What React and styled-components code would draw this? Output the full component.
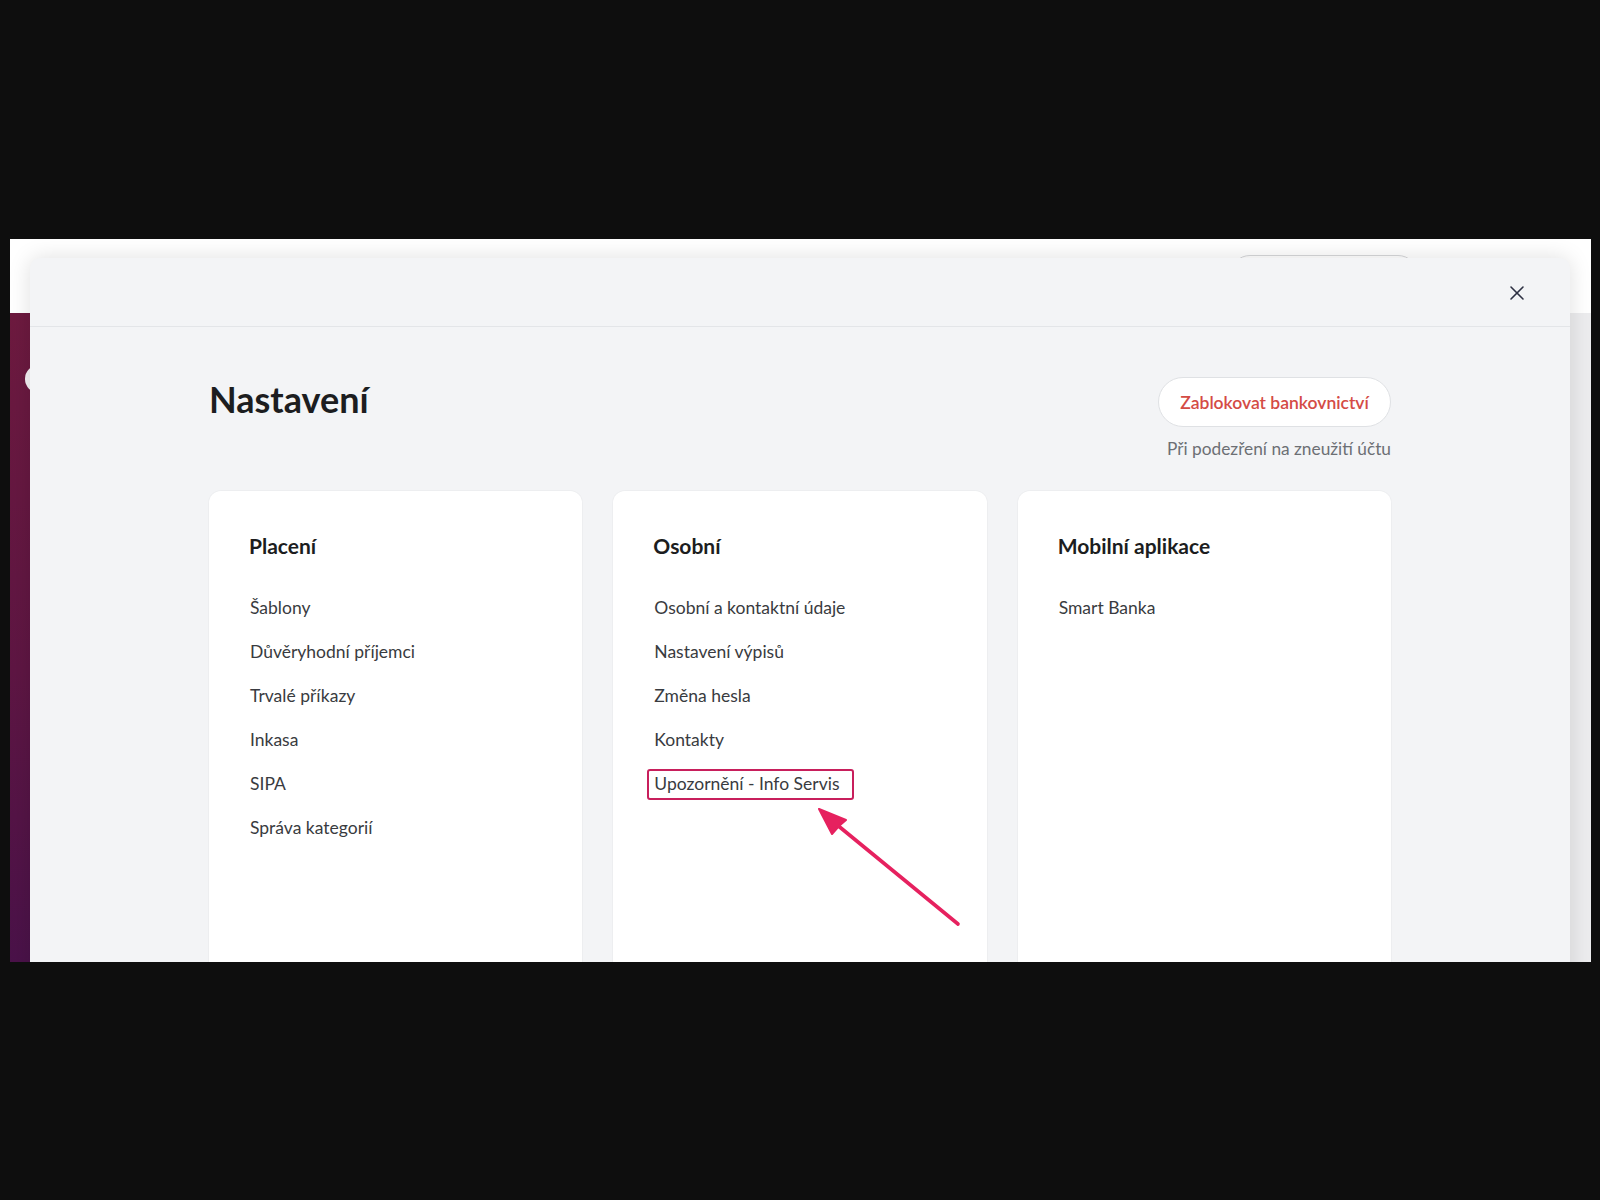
import React from "react";
import styled, { createGlobalStyle } from "styled-components";
import { X } from "lucide-react";

const GlobalStyle = createGlobalStyle`
  html, body {
    margin: 0;
    padding: 0;
    background: #0e0e0e;
  }
  body {
    font-family: Lato, "Open Sans", "Liberation Sans", sans-serif;
    -webkit-font-smoothing: antialiased;
  }
  * { box-sizing: border-box; }
`;

const Stage = styled.div`
  width: 1600px;
  height: 1200px;
  padding: 239px 9px 0 10px;
  background: #0e0e0e;
`;

const Frame = styled.div`
  position: relative;
  width: 1581px;
  height: 723px;
  overflow: hidden;
  background: #ececee;
  display: flex;
  flex-direction: column;
`;

const PageHeader = styled.header`
  height: 74px;
  flex: none;
  background: #ffffff;
  display: flex;
  justify-content: flex-end;
  align-items: flex-start;
  padding: 16px 173px 0 0;
`;

const HeaderPill = styled.div`
  width: 188px;
  height: 40px;
  border-radius: 20px;
  border: 1px solid #d6d7da;
  background: #ffffff;
`;

const PageBody = styled.div`
  flex: 1;
  display: flex;
`;

const Sidebar = styled.aside`
  width: 20px;
  flex: none;
  background: linear-gradient(180deg, #6d1a3f 0%, #5e1643 55%, #4a1249 100%);
  padding-top: 52px;
  display: flex;
  flex-direction: column;
`;

const SidebarDot = styled.div`
  width: 28px;
  height: 28px;
  margin-left: 15px;
  border-radius: 50%;
  background: #f4f1f3;
  flex: none;
`;

const PageContent = styled.main`
  flex: 1;
  background: #ececee;
`;

const Modal = styled.section`
  position: absolute;
  top: 19px;
  left: 20px;
  right: 21px;
  bottom: -40px;
  background: #f3f4f6;
  border-radius: 10px;
  box-shadow: 0 0 22px rgba(0, 0, 0, 0.13);
  display: flex;
  flex-direction: column;
`;

const ModalHeader = styled.div`
  height: 69px;
  flex: none;
  border-bottom: 1px solid #e3e5e8;
  display: flex;
  justify-content: flex-end;
  align-items: center;
  padding: 2px 41px 0 0;
`;

const CloseButton = styled.button`
  width: 24px;
  height: 24px;
  padding: 0;
  border: none;
  background: transparent;
  color: #2e3143;
  display: flex;
  align-items: center;
  justify-content: center;
  cursor: pointer;
`;

const ModalBody = styled.div`
  width: 1182px;
  margin: 0 auto;
  padding-top: 50px;
`;

const TopRow = styled.div`
  display: flex;
  justify-content: space-between;
  align-items: flex-start;
  margin-bottom: 31px;
`;

const PageTitle = styled.h1`
  margin: 0;
  font-size: 36px;
  line-height: 44px;
  font-weight: 700;
  color: #1c1d20;
  letter-spacing: 0;
`;

const BlockArea = styled.div`
  display: flex;
  flex-direction: column;
  align-items: flex-end;
`;

const BlockButton = styled.button`
  height: 50px;
  width: 233px;
  padding: 0;
  border-radius: 25px;
  border: 1px solid #dfe1e4;
  background: #ffffff;
  color: #d44b45;
  font-family: Lato, "Open Sans", sans-serif;
  font-size: 17.5px;
  font-weight: 600;
  cursor: pointer;
`;

const BlockHint = styled.div`
  margin-top: 11px;
  font-size: 17.3px;
  line-height: 22px;
  color: #6c6f74;
`;

const CardGrid = styled.div`
  display: grid;
  grid-template-columns: repeat(3, 1fr);
  gap: 31px;
`;

const Card = styled.div`
  position: relative;
  background: #ffffff;
  border-radius: 12px;
  box-shadow: 0 0 0 1px rgba(0, 0, 0, 0.025);
  padding: 41px 40px 40px 41px;
  min-height: 520px;
`;

const CardTitle = styled.h2`
  margin: 0 0 26px -1px;
  font-size: 21px;
  line-height: 28px;
  font-weight: 700;
  color: #1c1d20;
`;

const ItemList = styled.ul`
  list-style: none;
  margin: 0;
  padding: 0;
`;

const Item = styled.li`
  padding: 10px 0;
  font-size: 17.5px;
  line-height: 24px;
  color: #393b40;
`;

const ItemLabel = styled.span`
  position: relative;
  display: inline-block;

  ${(p) =>
    p.$highlighted &&
    `
    &::after {
      content: "";
      position: absolute;
      top: -3px;
      bottom: -4px;
      left: -7px;
      right: -15px;
      border: 2px solid #c81f5c;
      border-radius: 3px;
      pointer-events: none;
    }
  `}
`;

const ArrowMark = styled.svg`
  position: absolute;
  left: 190px;
  top: 301px;
  width: 170px;
  height: 145px;
  overflow: visible;
  pointer-events: none;
`;

const sections = [
  {
    title: "Placení",
    items: [
      "Šablony",
      "Důvěryhodní příjemci",
      "Trvalé příkazy",
      "Inkasa",
      "SIPA",
      "Správa kategorií",
    ],
  },
  {
    title: "Osobní",
    items: [
      "Osobní a kontaktní údaje",
      "Nastavení výpisů",
      "Změna hesla",
      "Kontakty",
      "Upozornění - Info Servis",
    ],
    highlight: 4,
    arrow: true,
  },
  {
    title: "Mobilní aplikace",
    items: ["Smart Banka"],
  },
];

function Arrow() {
  return (
    <ArrowMark viewBox="0 0 170 145">
      <line
        x1="33"
        y1="32"
        x2="155"
        y2="132"
        stroke="#e6215f"
        strokeWidth="3.6"
        strokeLinecap="round"
      />
      <path
        d="M16 17 L43 28 L36 34 L29 42 Z"
        fill="#e6215f"
        stroke="#e6215f"
        strokeWidth="2"
        strokeLinejoin="round"
      />
    </ArrowMark>
  );
}

export default function App() {
  return (
    <>
      <GlobalStyle />
      <Stage>
        <Frame>
          <PageHeader>
            <HeaderPill />
          </PageHeader>
          <PageBody>
            <Sidebar>
              <SidebarDot />
            </Sidebar>
            <PageContent />
          </PageBody>

          <Modal>
            <ModalHeader>
              <CloseButton aria-label="Zavřít">
                <X size={24} strokeWidth={1.6} />
              </CloseButton>
            </ModalHeader>
            <ModalBody>
              <TopRow>
                <PageTitle>Nastavení</PageTitle>
                <BlockArea>
                  <BlockButton>Zablokovat bankovnictví</BlockButton>
                  <BlockHint>Při podezření na zneužití účtu</BlockHint>
                </BlockArea>
              </TopRow>
              <CardGrid>
                {sections.map((s) => (
                  <Card key={s.title}>
                    <CardTitle>{s.title}</CardTitle>
                    <ItemList>
                      {s.items.map((it, i) => (
                        <Item key={it}>
                          <ItemLabel $highlighted={s.highlight === i}>{it}</ItemLabel>
                        </Item>
                      ))}
                    </ItemList>
                    {s.arrow && <Arrow />}
                  </Card>
                ))}
              </CardGrid>
            </ModalBody>
          </Modal>
        </Frame>
      </Stage>
    </>
  );
}
